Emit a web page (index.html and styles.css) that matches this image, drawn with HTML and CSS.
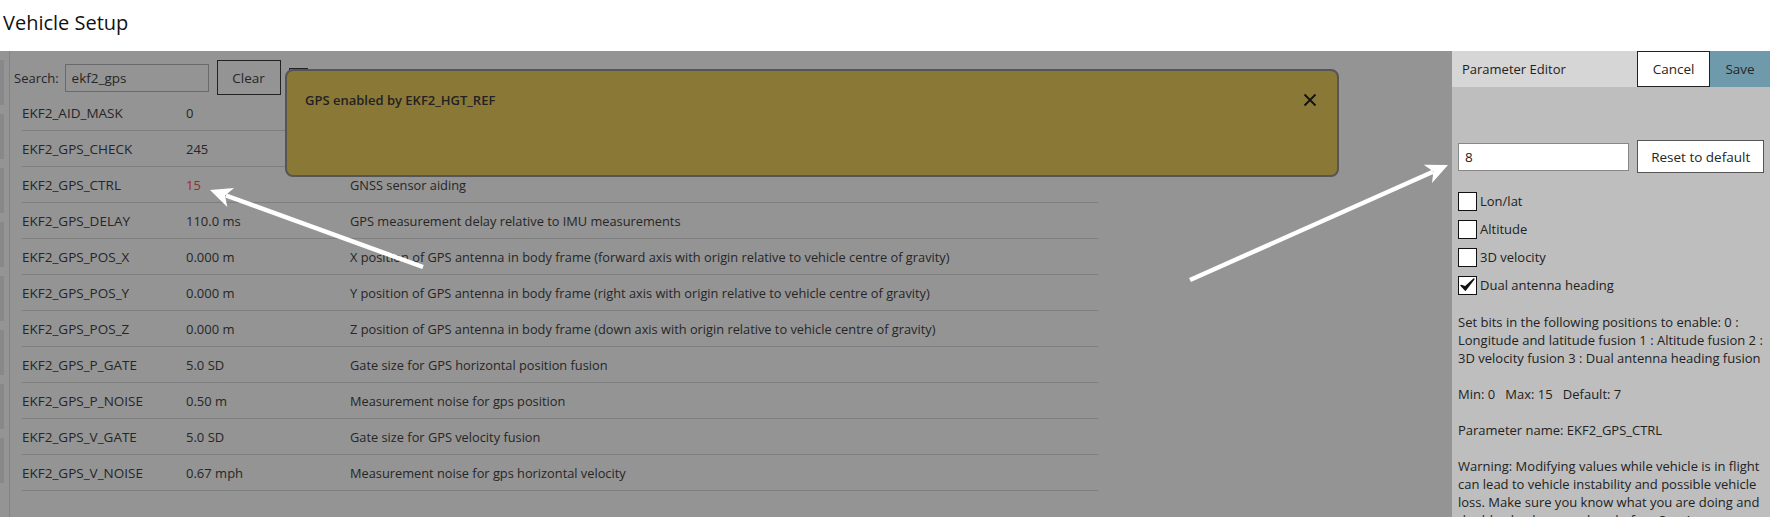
FILE: index.html
```html
<!DOCTYPE html>
<html>
<head>
<meta charset="utf-8">
<link rel="stylesheet" href="styles.css">
</head>
<body>
<div class="top"><h1 class="title">Vehicle Setup</h1></div>
<div class="main">
  <div class="left">
    <div class="sidebar">
      <span class="tab"></span><span class="tab"></span><span class="tab"></span><span class="tab"></span><span class="tab"></span><span class="tab"></span><span class="tab"></span><span class="tab"></span>
    </div>
    <div class="content">
      <div class="searchbar">
        <span class="lbl">Search:</span>
        <div class="search-input">ekf2_gps</div>
        <div class="btn clear">Clear</div>
        <span class="mini-check"></span>
      </div>
      <div class="table">
        <div class="row"><span class="c-name">EKF2_AID_MASK</span><span class="c-val">0</span><span class="c-desc"></span></div>
        <div class="row"><span class="c-name">EKF2_GPS_CHECK</span><span class="c-val">245</span><span class="c-desc"></span></div>
        <div class="row"><span class="c-name">EKF2_GPS_CTRL</span><span class="c-val red">15</span><span class="c-desc">GNSS sensor aiding</span></div>
        <div class="row"><span class="c-name">EKF2_GPS_DELAY</span><span class="c-val">110.0 ms</span><span class="c-desc">GPS measurement delay relative to IMU measurements</span></div>
        <div class="row"><span class="c-name">EKF2_GPS_POS_X</span><span class="c-val">0.000 m</span><span class="c-desc">X position of GPS antenna in body frame (forward axis with origin relative to vehicle centre of gravity)</span></div>
        <div class="row"><span class="c-name">EKF2_GPS_POS_Y</span><span class="c-val">0.000 m</span><span class="c-desc">Y position of GPS antenna in body frame (right axis with origin relative to vehicle centre of gravity)</span></div>
        <div class="row"><span class="c-name">EKF2_GPS_POS_Z</span><span class="c-val">0.000 m</span><span class="c-desc">Z position of GPS antenna in body frame (down axis with origin relative to vehicle centre of gravity)</span></div>
        <div class="row"><span class="c-name">EKF2_GPS_P_GATE</span><span class="c-val">5.0 SD</span><span class="c-desc">Gate size for GPS horizontal position fusion</span></div>
        <div class="row"><span class="c-name">EKF2_GPS_P_NOISE</span><span class="c-val">0.50 m</span><span class="c-desc">Measurement noise for gps position</span></div>
        <div class="row"><span class="c-name">EKF2_GPS_V_GATE</span><span class="c-val">5.0 SD</span><span class="c-desc">Gate size for GPS velocity fusion</span></div>
        <div class="row"><span class="c-name">EKF2_GPS_V_NOISE</span><span class="c-val">0.67 mph</span><span class="c-desc">Measurement noise for gps horizontal velocity</span></div>
      </div>
    </div>
  </div>
  <div class="editor">
    <div class="ed-head">
      <span class="ed-title">Parameter Editor</span>
      <div class="btn cancel">Cancel</div>
      <div class="btn save">Save</div>
    </div>
    <div class="ed-body">
      <div class="val-row">
        <div class="val-input">8</div>
        <div class="btn reset">Reset to default</div>
      </div>
      <div class="checks">
        <div class="chk-row"><span class="box"></span><span>Lon/lat</span></div>
        <div class="chk-row"><span class="box"></span><span>Altitude</span></div>
        <div class="chk-row"><span class="box"></span><span>3D velocity</span></div>
        <div class="chk-row"><span class="box"><svg viewBox="0 0 20 20" width="18" height="18"><path d="M2.5 10.5 L7.5 16 L17.5 3 L7.6 12.2 Z" fill="#111" stroke="#111" stroke-width="1.8" stroke-linejoin="round"/></svg></span><span>Dual antenna heading</span></div>
      </div>
      <p class="txt">Set bits in the following positions to enable: 0 : Longitude and latitude fusion 1 : Altitude fusion 2 : 3D velocity fusion 3 : Dual antenna heading fusion</p>
      <p class="txt">Min: 0&nbsp;&nbsp; Max: 15&nbsp;&nbsp; Default: 7</p>
      <p class="txt">Parameter name: EKF2_GPS_CTRL</p>
      <p class="txt">Warning: Modifying values while vehicle is in flight can lead to vehicle instability and possible vehicle loss. Make sure you know what you are doing and double-check your values before Save!</p>
    </div>
  </div>
</div>

<div class="popup">
  <span class="popup-text">GPS enabled by EKF2_HGT_REF</span>
  <svg class="close" viewBox="0 0 14 14" width="14" height="14"><path d="M1.5 1.5 L12.5 12.5 M12.5 1.5 L1.5 12.5" stroke="#111" stroke-width="1.8"/></svg>
</div>

<svg class="arrows" width="1770" height="517" viewBox="0 0 1770 517">
  <line x1="423" y1="267" x2="226" y2="195.5" stroke="#fff" stroke-width="4.5"/>
  <path d="M210 190 L234.1 188.1 L225 195.4 L227.3 206.9 Z" fill="#fff"/>
  <line x1="1190" y1="280" x2="1433" y2="171.7" stroke="#fff" stroke-width="4.5"/>
  <path d="M1448 165 L1432 183 L1433.4 171.5 L1423.8 164.8 Z" fill="#fff"/>
</svg>
</body>
</html>
```

FILE: styles.css
```css
* { box-sizing: border-box; }
html, body {
  margin: 0;
  padding: 0;
  width: 1770px;
  height: 517px;
  overflow: hidden;
  font-family: "Open Sans", "Noto Sans", sans-serif;
  color: #262626;
  font-size: 13px;
}
body { position: relative; background: #949494; }

.top {
  height: 51px;
  background: #fff;
  display: flex;
  align-items: center;
  padding-left: 3px;
}
.title {
  margin: 0;
  font-size: 20px;
  font-weight: 400;
  color: #111;
  margin-top: -6px;
}

.main {
  display: flex;
  height: 466px;
  overflow: hidden;
}
.left {
  width: 1452px;
  display: flex;
  background: #949494;
  flex: none;
}
.sidebar {
  width: 10px;
  border-right: 1px solid #838383;
  display: flex;
  flex-direction: column;
  gap: 9px;
  padding-top: 9px;
}
.tab {
  display: block;
  width: 4px;
  height: 45px;
  background: #888;
  flex: none;
}
.content {
  flex: 1;
  padding-left: 4px;
}
.searchbar {
  display: flex;
  align-items: center;
  height: 44px;
  padding-top: 9px;
  gap: 8px;
}
.lbl { font-size: 13px; color: #262626; margin-right: -2px; }
.search-input {
  width: 144px;
  height: 28px;
  border: 1px solid #6a6a6a;
  padding-left: 6px;
  display: flex;
  align-items: center;
  color: #262626;
  font-size: 13.5px;
}
.btn {
  display: flex;
  align-items: center;
  justify-content: center;
  color: #262626;
}
.clear {
  width: 64px;
  height: 35px;
  border: 1px solid #222;
  font-size: 13.5px;
}
.mini-check {
  width: 19px;
  height: 19px;
  border: 1.5px solid #222;
  align-self: flex-start;
  margin-top: 8px;
}

.table {
  margin-left: 8px;
  width: 1076px;
}
.row {
  display: flex;
  align-items: center;
  height: 36px;
  border-bottom: 1px solid #7e7e7e;
  white-space: nowrap;
}
.c-name { width: 164px; font-size: 13.5px; }
.c-val { width: 164px; font-size: 13px; }
.c-desc { flex: 1; font-size: 12.8px; }
.red { color: #9a2b2b; }

.editor {
  width: 318px;
  flex: none;
  background: #bebebe;
  display: flex;
  flex-direction: column;
  overflow: hidden;
}
.ed-head {
  height: 36px;
  flex: none;
  display: flex;
  background: #d6d6d6;
}
.ed-title {
  flex: 1;
  display: flex;
  align-items: center;
  padding-left: 10px;
  font-size: 13px;
  color: #222;
}
.cancel {
  width: 73px;
  background: #fff;
  border: 1px solid #222;
  font-size: 13.5px;
}
.save {
  width: 60px;
  background: #6f9aab;
  font-size: 13.5px;
}
.ed-body {
  flex: none;
  padding: 0 6px 0 6px;
}
.val-row {
  display: flex;
  align-items: center;
  gap: 8px;
  margin-top: 53px;
  height: 33px;
}
.val-input {
  width: 172px;
  height: 28px;
  background: #fff;
  border: 1px solid #888;
  display: flex;
  align-items: center;
  padding-left: 6px;
  color: #222;
  font-size: 13.5px;
}
.reset {
  width: 127px;
  height: 33px;
  background: #fff;
  border: 1px solid #555;
  font-size: 13.5px;
}
.checks {
  margin-top: 18px;
  display: flex;
  flex-direction: column;
  gap: 8px;
}
.chk-row {
  display: flex;
  align-items: center;
  gap: 3px;
  height: 20px;
  font-size: 13px;
  color: #222;
}
.box {
  width: 19px;
  height: 19px;
  background: #fff;
  border: 1px solid #111;
  display: flex;
  align-items: center;
  justify-content: center;
}
.txt {
  margin: 18px 0 0 0;
  font-size: 13px;
  line-height: 18px;
  color: #222;
}
.checks + .txt { margin-top: 18px; }

.popup {
  position: absolute;
  left: 285px;
  top: 69px;
  width: 1054px;
  height: 108px;
  background: #8a7837;
  border: 2px solid #555;
  border-radius: 8px;
  padding: 10px 18px;
  display: flex;
  justify-content: space-between;
  align-items: flex-start;
}
.popup-text {
  font-size: 13px;
  font-weight: 600;
  color: #222;
  margin-top: 10px;
}
.close { margin-top: 12px; margin-right: 2px; }

.arrows {
  position: absolute;
  left: 0;
  top: 0;
  pointer-events: none;
}
```
